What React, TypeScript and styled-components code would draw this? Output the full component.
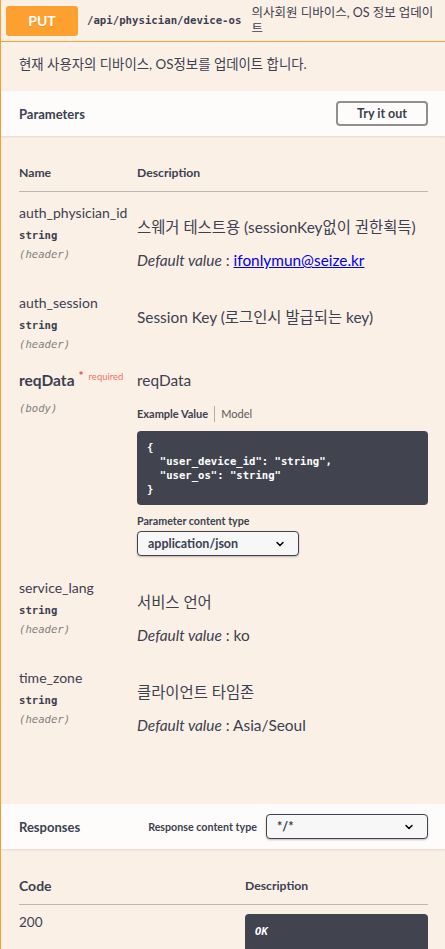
import React from 'react';
import styled, { createGlobalStyle } from 'styled-components';

const SANS = `Lato, "Noto Sans CJK KR", sans-serif`;
const MONO = `"DejaVu Sans Mono", "Noto Sans CJK KR", monospace`;
const TEXT = '#3b4151';

const GlobalStyle = createGlobalStyle`
  html, body { margin: 0; padding: 0; background: #ffffff; }
  body { font-family: ${SANS}; color: ${TEXT}; }
  * { box-sizing: border-box; }
`;

const Block = styled.div`
  border-left: 1px solid #fca130;
  background: #fbf0e5;
  min-height: 949px;
`;

const Summary = styled.div`
  display: flex;
  align-items: center;
  height: 42px;
  padding: 0 5px;
  border-bottom: 1px solid #fca130;
`;

const MethodBadge = styled.span`
  flex: none;
  display: flex;
  align-items: center;
  justify-content: center;
  width: 72px;
  height: 30px;
  border-radius: 3px;
  background: #fca130;
  color: #fff;
  font-family: ${SANS};
  font-weight: 700;
  font-size: 14px;
  text-shadow: 0 1px 0 rgba(0, 0, 0, 0.1);
`;

const PathText = styled.span`
  flex: none;
  margin-left: 9px;
  font-family: ${MONO};
  font-weight: 600;
  font-size: 10.7px;
  color: ${TEXT};
`;

const SummaryDesc = styled.span`
  flex: 1;
  margin-left: 10px;
  padding-right: 6px;
  font-size: 12.5px;
  line-height: 16px;
  color: ${TEXT};
`;

const OpDescription = styled.div`
  padding: 12px 18px 17px;
  font-size: 13.4px;
  line-height: 20px;
`;

const SectionHeader = styled.div`
  display: flex;
  align-items: center;
  justify-content: space-between;
  height: 45px;
  padding: 0 17px 0 18px;
  background: rgba(255, 255, 255, 0.8);
  box-shadow: 0 1px 2px rgba(0, 0, 0, 0.1);
`;

const SectionTitle = styled.h4`
  margin: 0;
  font-size: 13px;
  font-weight: 700;
  color: ${TEXT};
`;

const TryButton = styled.button`
  width: 92px;
  height: 25px;
  border: 2px solid #8f8f8f;
  border-radius: 4px;
  background: transparent;
  font-family: ${SANS};
  font-size: 12.5px;
  font-weight: 700;
  color: ${TEXT};
  padding: 0;
`;

const TableWrap = styled.div<{ $bottom: number }>`
  padding: 0 17px ${(p) => p.$bottom}px 18px;
`;

const HeadRow = styled.div<{ $cols: string }>`
  display: grid;
  grid-template-columns: ${(p) => p.$cols};
  align-items: center;
  padding: 29px 0 10px;
  border-bottom: 1px solid #bdb7b2;
`;

const HeadCell = styled.div<{ $size: number }>`
  font-size: ${(p) => p.$size}px;
  font-weight: 700;
  line-height: 16px;
  color: ${TEXT};
`;

const ParamRow = styled.div`
  display: grid;
  grid-template-columns: 118px 1fr;
  padding: 10px 0 7px;
`;

const NameCell = styled.div`
  display: flex;
  flex-direction: column;
`;

const ParamName = styled.div<{ $required?: boolean }>`
  font-size: ${(p) => (p.$required ? 15.5 : 14)}px;
  line-height: 22px;
  font-weight: ${(p) => (p.$required ? 700 : 400)};
  white-space: nowrap;
  color: ${TEXT};
`;

const RequiredMark = styled.span`
  font-size: 9.5px;
  font-weight: 400;
  vertical-align: super;
  line-height: 0;
  margin-left: 4px;
  color: rgba(255, 0, 0, 0.6);
`;

const Star = styled.span`
  font-size: 12px;
  color: #f93e3e;
  font-weight: 700;
  margin-right: 5px;
`;

const ParamType = styled.div`
  margin-top: 3px;
  font-family: ${MONO};
  font-size: 10.6px;
  font-weight: 600;
  line-height: 16px;
  color: ${TEXT};
`;

const ParamIn = styled.div<{ $gap: number }>`
  margin-top: ${(p) => p.$gap}px;
  font-family: ${MONO};
  font-size: 10.6px;
  font-style: italic;
  line-height: 16px;
  color: #808080;
`;

const DescCell = styled.div`
  padding-bottom: 4px;
`;

const DescText = styled.p<{ $top: number }>`
  margin: ${(p) => p.$top}px 0 0;
  font-size: 15.4px;
  line-height: 22px;
  color: ${TEXT};
`;

const DefaultLabel = styled.i`
  font-style: italic;
`;

const MailLink = styled.a`
  color: #0000ee;
  text-decoration: underline;
`;

const TabBar = styled.div`
  display: flex;
  align-items: center;
  margin-top: 15px;
  height: 16px;
  font-size: 11px;
`;

const Tab = styled.span<{ $active?: boolean }>`
  font-weight: ${(p) => (p.$active ? 700 : 400)};
  color: ${(p) => (p.$active ? TEXT : '#55595f')};
  padding: ${(p) => (p.$active ? '0 6px 0 0' : '0 0 0 6px')};
  border-left: ${(p) => (p.$active ? 'none' : '1px solid #b5ada6')};
  line-height: 16px;
`;

const CodeBlock = styled.pre`
  margin: 9px 0 0;
  padding: 9px 10px;
  background: #41444e;
  border-radius: 4px;
  font-family: ${MONO};
  font-size: 10.6px;
  font-weight: 700;
  line-height: 14px;
  color: #ffffff;
`;

const FieldLabel = styled.div<{ $top: number }>`
  margin-top: ${(p) => p.$top}px;
  font-size: 10.7px;
  font-weight: 700;
  line-height: 16px;
  color: ${TEXT};
  white-space: nowrap;
`;

const SelectBox = styled.div<{ $top: number }>`
  display: flex;
  align-items: center;
  justify-content: space-between;
  width: 162px;
  height: 25px;
  margin-top: ${(p) => p.$top}px;
  padding: 0 13px 0 10px;
  border: 1px solid #41444e;
  border-radius: 4px;
  background: #f7f7f7;
  box-shadow: 0 1px 2px rgba(0, 0, 0, 0.25);
  font-size: 12.5px;
  font-weight: 700;
  color: ${TEXT};
  flex: none;
`;

const ResponseRight = styled.div`
  display: flex;
  align-items: center;
  gap: 9px;
`;

const RespRow = styled.div`
  display: grid;
  grid-template-columns: 226px 1fr;
  padding-top: 7px;
`;

const CodeText = styled.div`
  font-size: 13.5px;
  line-height: 20px;
  color: ${TEXT};
`;

const ResponseDesc = styled.div`
  margin-top: 2px;
  padding: 10px;
  min-height: 40px;
  border-radius: 4px;
  background: #41444e;
  font-family: ${MONO};
  font-size: 10.6px;
  font-style: italic;
  font-weight: 700;
  line-height: 14px;
  color: #ffffff;
`;

const Chevron = () => (
  <svg width="10" height="10" viewBox="0 0 10 10" aria-hidden>
    <path d="M2 3.5 L5 6.5 L8 3.5" fill="none" stroke="#000" strokeWidth="1.5" strokeLinecap="round" strokeLinejoin="round" />
  </svg>
);

type HeaderParam = { name: string; desc: string; def?: React.ReactNode };

const HeaderParamRow = ({ name, desc, def }: HeaderParam) => (
  <ParamRow>
    <NameCell>
      <ParamName>{name}</ParamName>
      <ParamType>string</ParamType>
      <ParamIn $gap={3}>(header)</ParamIn>
    </NameCell>
    <DescCell>
      <DescText $top={14}>{desc}</DescText>
      {def !== undefined && (
        <DescText $top={11}>
          <DefaultLabel>Default value</DefaultLabel> : {def}
        </DescText>
      )}
    </DescCell>
  </ParamRow>
);

export default function App() {
  return (
    <>
      <GlobalStyle />
      <Block>
        <Summary>
          <MethodBadge>PUT</MethodBadge>
          <PathText>/api/physician/device-os</PathText>
          <SummaryDesc>의사회원 디바이스, OS 정보 업데이트</SummaryDesc>
        </Summary>
        <OpDescription>현재 사용자의 디바이스, OS정보를 업데이트 합니다.</OpDescription>

        <SectionHeader>
          <SectionTitle>Parameters</SectionTitle>
          <TryButton>Try it out</TryButton>
        </SectionHeader>

        <TableWrap $bottom={57}>
          <HeadRow $cols="118px 1fr">
            <HeadCell $size={12.2}>Name</HeadCell>
            <HeadCell $size={12.2}>Description</HeadCell>
          </HeadRow>

          <HeaderParamRow
            name="auth_physician_id"
            desc="스웨거 테스트용 (sessionKey없이 권한획득)"
            def={<MailLink href="#">ifonlymun@seize.kr</MailLink>}
          />
          <HeaderParamRow name="auth_session" desc="Session Key (로그인시 발급되는 key)" />

          <ParamRow>
            <NameCell>
              <ParamName $required>
                reqData
                <RequiredMark>
                  <Star>*</Star>required
                </RequiredMark>
              </ParamName>
              <ParamIn $gap={9}>(body)</ParamIn>
            </NameCell>
            <DescCell>
              <DescText $top={0}>reqData</DescText>
              <TabBar>
                <Tab $active>Example Value</Tab>
                <Tab>Model</Tab>
              </TabBar>
              <CodeBlock>{`{
  "user_device_id": "string",
  "user_os": "string"
}`}</CodeBlock>
              <FieldLabel $top={8}>Parameter content type</FieldLabel>
              <SelectBox $top={2}>
                <span>application/json</span>
                <Chevron />
              </SelectBox>
            </DescCell>
          </ParamRow>

          <HeaderParamRow name="service_lang" desc="서비스 언어" def="ko" />
          <HeaderParamRow name="time_zone" desc="클라이언트 타임존" def="Asia/Seoul" />
        </TableWrap>

        <SectionHeader>
          <SectionTitle>Responses</SectionTitle>
          <ResponseRight>
            <FieldLabel $top={0}>Response content type</FieldLabel>
            <SelectBox $top={0}>
              <span>*/*</span>
              <Chevron />
            </SelectBox>
          </ResponseRight>
        </SectionHeader>

        <TableWrap $bottom={20}>
          <HeadRow $cols="226px 1fr">
            <HeadCell $size={14}>Code</HeadCell>
            <HeadCell $size={12.2}>Description</HeadCell>
          </HeadRow>
          <RespRow>
            <CodeText>200</CodeText>
            <ResponseDesc>OK</ResponseDesc>
          </RespRow>
        </TableWrap>
      </Block>
    </>
  );
}
